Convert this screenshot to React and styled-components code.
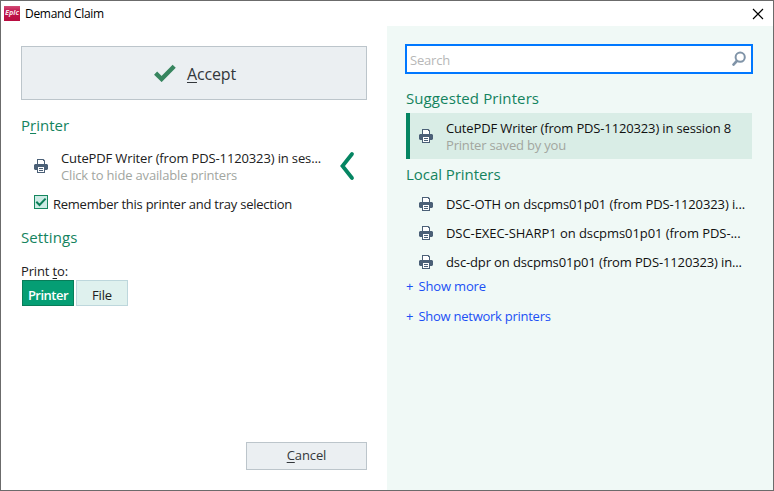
import React from "react";
import styled, { createGlobalStyle } from "styled-components";

const GlobalStyle = createGlobalStyle`
  * { box-sizing: border-box; }
  body {
    margin: 0;
    overflow: hidden;
    font-family: "Open Sans", "Noto Sans", sans-serif;
    font-size: 13px;
    color: #202020;
  }
  button, input { font: inherit; color: inherit; margin: 0; padding: 0; }
`;

const Dialog = styled.div`
  width: 774px;
  height: 491px;
  border: 1px solid #6b6b6b;
  background: #fff;
  display: flex;
  flex-direction: column;
`;

const TitleBar = styled.header`
  height: 25px;
  flex: none;
  display: flex;
  align-items: center;
  padding: 0 9px 0 3px;
  color: #000;
`;

const Title = styled.h1`
  flex: 1;
  margin: 0 0 0 5px;
  font-size: 12px;
  font-weight: 400;
  line-height: 18px;
  letter-spacing: -0.3px;
`;

const IconButton = styled.button`
  display: flex;
  border: 0;
  background: none;
`;

const Body = styled.div`
  flex: 1;
  display: flex;
`;

const MainPane = styled.main`
  width: 386px;
  padding: 20px;
  display: flex;
  flex-direction: column;
`;

const PrintersPane = styled.aside`
  flex: 1;
  padding: 18px 20px 0 18px;
  background: #f0f9f6;
  display: flex;
  flex-direction: column;
`;

const Label = styled.span`
  letter-spacing: ${(p) => p.$tracking || 0}px;
  white-space: pre;
`;

const Key = styled.span`
  text-decoration: underline;
  text-decoration-thickness: 1px;
  text-underline-offset: 2px;
  text-decoration-skip-ink: none;
`;

const PushButton = styled.button`
  border: 1px solid #bcc5cb;
  background: #ebeff2;
  color: #33373b;
  display: flex;
  align-items: center;
  justify-content: center;
`;

const AcceptButton = styled(PushButton)`
  height: 54px;
  flex: none;
  gap: 11px;
  font-size: 16px;
  padding: 2px 0 0 2px;
  svg { margin-top: -3px; }
`;

const CancelButton = styled(PushButton)`
  width: 121px;
  height: 28px;
  margin-top: auto;
  align-self: flex-end;
  padding-bottom: 2px;
`;

const Heading = styled.h2`
  margin: ${(p) => p.$top}px 0 0 ${(p) => p.$left || 0}px;
  font-size: 15px;
  font-weight: 400;
  line-height: 20px;
  letter-spacing: ${(p) => p.$tracking || 0}px;
  color: #14835e;
`;

const CurrentPrinter = styled.div`
  display: flex;
  align-items: flex-start;
  margin-top: 15px;
  padding-left: 13px;
`;

const PrinterText = styled.div`
  flex: 1;
  margin-left: 13px;
  display: flex;
  flex-direction: column;
  line-height: 17px;
`;

const Muted = styled(Label)`
  color: #a2a69f;
`;

const PrinterGlyph = styled.svg`
  width: 14px;
  height: 14px;
  flex: none;
  margin-top: ${(p) => p.$top}px;
`;

const CollapseButton = styled(IconButton)`
  margin: 1px 12px 0 0;
`;

const CheckRow = styled.label`
  display: flex;
  margin: 11px 0 0 13px;
  line-height: 18px;
`;

const CheckBox = styled.span`
  width: 14px;
  height: 14px;
  margin-right: 5px;
  border: 1px solid #16875f;
  background: #cdebe5;
  display: flex;
`;

const FieldLabel = styled.div`
  margin-top: 15px;
  line-height: 18px;
`;

const Toggle = styled.div`
  display: flex;
  gap: 2px;
  margin-left: 1px;
`;

const ToggleOption = styled.button`
  width: 52px;
  height: 26px;
  padding-top: 4px;
  line-height: 18px;
  border: 1px solid ${(p) => (p.$active ? "#087d59" : "#bdd7dc")};
  background: ${(p) => (p.$active ? "#059e74" : "#dff1ee")};
  color: ${(p) => (p.$active ? "#fff" : "#202020")};
  font-weight: ${(p) => (p.$active ? 600 : 400)};
`;

const SearchBox = styled.div`
  width: 348px;
  height: 30px;
  border: 2px solid #0078ff;
  background: #fff;
  display: flex;
  align-items: center;
  padding: 0 5px 0 3px;
`;

const SearchInput = styled.input`
  flex: 1;
  min-width: 0;
  height: 18px;
  margin-top: 1px;
  border: 0;
  outline: 0;
  background: none;
  letter-spacing: -0.2px;
  &::placeholder { color: #b7b7b7; opacity: 1; }
`;

const SuggestedItem = styled.div`
  width: 346px;
  height: 46px;
  margin: 5px 0 0 1px;
  border-left: 4px solid #058562;
  background: #d9ede6;
  display: flex;
  padding: 7px 0 0 9px;
  color: #111;
`;

const PrinterItem = styled.div`
  height: 29px;
  display: flex;
  gap: 13px;
  padding-left: 14px;
  line-height: 18px;
  color: #111;
`;

const ItemName = styled(Label)`
  margin-top: 5px;
`;

const PrinterList = styled.div`
  margin-top: 6px;
`;

const MoreLink = styled.a`
  margin: ${(p) => p.$top}px 0 0 1px;
  line-height: 18px;
  color: #1b50f5;
  display: flex;
  gap: 5px;
`;

const PrinterIcon = ({ top }) => (
  <PrinterGlyph $top={top} viewBox="0 0 14 14">
    <path fill="#4b6077" d="M3 0h6.5L11 1.5V5h2l1 1v4l-1 1h-2v3H3v-3H1l-1-1V6l1-1h2z" />
    <path fill="#fff" d="M4 1h5v1h1v3H4zM4 8h6v5H4z" />
    <path fill="#4b6077" d="M5 9h4v1H5zM5 11h4v1H5z" />
  </PrinterGlyph>
);

const AppIcon = () => (
  <svg width="16" height="15" viewBox="0 0 16 15">
    <defs>
      <linearGradient id="appRed" x2="0" y2="1">
        <stop offset="0" stopColor="#d24c76" />
        <stop offset=".35" stopColor="#c2184f" />
        <stop offset="1" stopColor="#b80c40" />
      </linearGradient>
    </defs>
    <rect width="16" height="15" fill="url(#appRed)" />
    <text x="1" y="9.4" fontSize="6.5" fontWeight="700" fontStyle="italic" fill="#fff" fillOpacity=".9" textLength="14" lengthAdjust="spacingAndGlyphs">Epic</text>
  </svg>
);

const localPrinters = [
  { name: "DSC-OTH on dscpms01p01 (from PDS-1120323) i...", tracking: -0.11 },
  { name: "DSC-EXEC-SHARP1 on dscpms01p01 (from PDS-...", tracking: -0.06 },
  { name: "dsc-dpr on dscpms01p01 (from PDS-1120323) in...", tracking: -0.13 },
];

export default function App() {
  return (
    <Dialog>
      <GlobalStyle />
      <TitleBar>
        <AppIcon />
        <Title>Demand Claim</Title>
        <IconButton aria-label="Close">
          <svg width="12" height="12" viewBox="0 0 12 12">
            <path d="M1 1l10 10M11 1L1 11" stroke="#000" strokeWidth="1.15" />
          </svg>
        </IconButton>
      </TitleBar>
      <Body>
        <MainPane>
          <AcceptButton>
            <svg width="22" height="18" viewBox="0 0 22 18">
              <path d="M1.6 9.2L7.6 15L20.2 2.2" fill="none" stroke="#37855f" strokeWidth="4.4" />
            </svg>
            <Label $tracking={-0.15}><Key>A</Key>ccept</Label>
          </AcceptButton>

          <Heading $top={15}>P<Key>r</Key>inter</Heading>
          <CurrentPrinter>
            <PrinterIcon top={9} />
            <PrinterText>
              <Label $tracking={-0.135}>CutePDF Writer (from PDS-1120323) in ses...</Label>
              <Muted $tracking={-0.17}>Click to hide available printers</Muted>
            </PrinterText>
            <CollapseButton aria-label="Hide available printers">
              <svg width="16" height="30" viewBox="0 0 16 30">
                <path d="M13 3L3.5 15L13 27" fill="none" stroke="#058562" strokeWidth="3.8" strokeLinecap="round" />
              </svg>
            </CollapseButton>
          </CurrentPrinter>
          <CheckRow>
            <CheckBox>
              <svg width="12" height="12" viewBox="0 0 12 12">
                <path d="M1.3 5.8l3.2 3.2L10.6 2.6" fill="none" stroke="#0b8058" strokeWidth="2" />
              </svg>
            </CheckBox>
            <Label $tracking={-0.246}>Remember this printer and tray selection</Label>
          </CheckRow>

          <Heading $top={14} $tracking={0.1}>Settings</Heading>
          <FieldLabel>
            <Label $tracking={-0.14}>Print <Key>t</Key>o:</Label>
          </FieldLabel>
          <Toggle>
            <ToggleOption $active><Label $tracking={-0.5}>Printer</Label></ToggleOption>
            <ToggleOption><Label $tracking={-0.14}>File</Label></ToggleOption>
          </Toggle>

          <CancelButton><Label $tracking={-0.1}><Key>C</Key>ancel</Label></CancelButton>
        </MainPane>

        <PrintersPane>
          <SearchBox>
            <SearchInput placeholder="Search" />
            <svg width="14" height="16" viewBox="0 0 14 16">
              <circle cx="8.2" cy="6.2" r="4.6" fill="none" stroke="#8094a8" strokeWidth="2" />
              <path d="M4.8 10L1.5 13.6" stroke="#8094a8" strokeWidth="2.6" strokeLinecap="round" />
            </svg>
          </SearchBox>

          <Heading $top={14} $left={1} $tracking={0.1}>Suggested Printers</Heading>
          <SuggestedItem>
            <PrinterIcon top={9} />
            <PrinterText>
              <Label $tracking={-0.144}>CutePDF Writer (from PDS-1120323) in session 8</Label>
              <Muted $tracking={-0.185}>Printer saved by you</Muted>
            </PrinterText>
          </SuggestedItem>

          <Heading $top={5} $left={1} $tracking={-0.05}>Local Printers</Heading>
          <PrinterList>
            {localPrinters.map((p) => (
              <PrinterItem key={p.name}>
                <PrinterIcon top={7} />
                <ItemName $tracking={p.tracking}>{p.name}</ItemName>
              </PrinterItem>
            ))}
          </PrinterList>
          <MoreLink $top={0}><span>+</span><Label $tracking={-0.15}>Show more</Label></MoreLink>
          <MoreLink $top={12}><span>+</span><Label $tracking={-0.26}>Show network printers</Label></MoreLink>
        </PrintersPane>
      </Body>
    </Dialog>
  );
}
